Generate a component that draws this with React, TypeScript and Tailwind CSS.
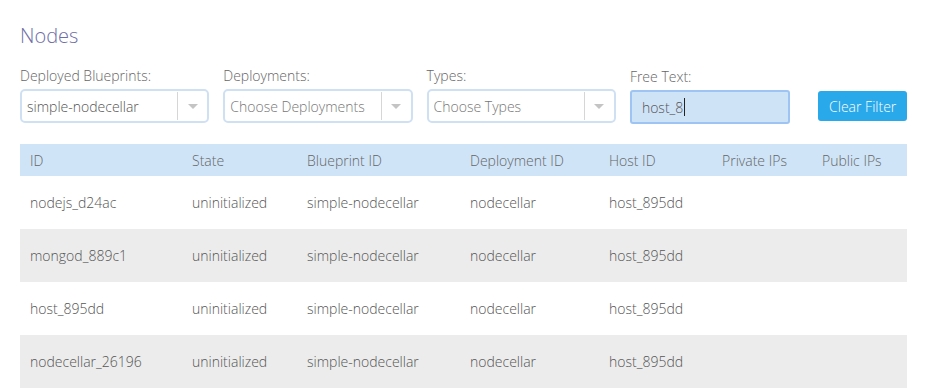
import React from 'react';

const font = { fontFamily: '"Open Sans", "Liberation Sans", sans-serif' };

const rows = [
  { id: 'nodejs_d24ac', state: 'uninitialized', blueprint: 'simple-nodecellar', deployment: 'nodecellar', host: 'host_895dd' },
  { id: 'mongod_889c1', state: 'uninitialized', blueprint: 'simple-nodecellar', deployment: 'nodecellar', host: 'host_895dd' },
  { id: 'host_895dd', state: 'uninitialized', blueprint: 'simple-nodecellar', deployment: 'nodecellar', host: 'host_895dd' },
  { id: 'nodecellar_26196', state: 'uninitialized', blueprint: 'simple-nodecellar', deployment: 'nodecellar', host: 'host_895dd' },
];

function Select({ label, value, placeholder }: { label: string; value?: string; placeholder?: boolean }) {
  return (
    <div className="flex flex-col w-[190px]">
      <label className="text-[14px] text-[#666] font-light leading-[20px] mb-[3px]">{label}</label>
      <div className="h-[34px] flex items-stretch border-2 border-[#cfe0f3] rounded-[5px] bg-white">
        <div className={`flex-1 flex items-center pl-[5px] text-[14px] font-light ${placeholder ? 'text-[#777]' : 'text-[#555]'}`}>
          {value}
        </div>
        <div className="w-[30px] flex items-center justify-center border-l border-[#d6d6d6] my-[1px]">
          <div className="w-0 h-0 border-l-[5px] border-r-[5px] border-t-[5px] border-l-transparent border-r-transparent border-t-[#c4c4c4]" />
        </div>
      </div>
    </div>
  );
}

export default function App() {
  return (
    <div className="w-[926px] h-[388px] overflow-hidden bg-white pl-[20px] pr-[19px]" style={font}>
      <h1 className="text-[20px] font-light text-[#6e6ea6] pt-[22px] leading-[28px]">Nodes</h1>

      <div className="flex items-start mt-[16px]">
        <Select label="Deployed Blueprints:" value="simple-nodecellar" />
        <div className="w-[14px]" />
        <Select label="Deployments:" value="Choose Deployments" placeholder />
        <div className="w-[14px]" />
        <Select label="Types:" value="Choose Types" placeholder />
        <div className="w-[14px]" />
        <div className="flex flex-col w-[161px] pt-[1px]">
          <label className="text-[14px] text-[#666] font-light leading-[20px] mb-[3px]">Free Text:</label>
          <div className="h-[34px] flex items-center border-2 border-[#9dc4f3] rounded-[3px] bg-[#cfe3f7] pl-[10px] text-[14px] font-light text-[#555]">
            host_8<span className="inline-block w-[1px] h-[18px] bg-[#222] ml-[1px]" />
          </div>
        </div>
        <button className="ml-[28px] mt-[25px] w-[89px] h-[30px] rounded-[3px] bg-[#29a8ea] text-white text-[14px] font-light">
          Clear Filter
        </button>
      </div>

      <table className="w-[887px] mt-[20px] border-collapse text-[14px] font-light text-[#555] table-fixed">
        <colgroup>
          <col className="w-[162px]" />
          <col className="w-[115px]" />
          <col className="w-[163px]" />
          <col className="w-[139px]" />
          <col className="w-[113px]" />
          <col className="w-[100px]" />
          <col className="w-[95px]" />
        </colgroup>
        <thead>
          <tr className="bg-[#cfe4f7] h-[32px] text-left text-[#666]">
            <th className="font-light pl-[10px]">ID</th>
            <th className="font-light pl-[10px]">State</th>
            <th className="font-light pl-[10px]">Blueprint ID</th>
            <th className="font-light pl-[10px]">Deployment ID</th>
            <th className="font-light pl-[10px]">Host ID</th>
            <th className="font-light pl-[10px]">Private IPs</th>
            <th className="font-light pl-[10px]">Public IPs</th>
          </tr>
        </thead>
        <tbody>
          {rows.map((r, i) => (
            <tr key={r.id} className={`h-[53px] ${i % 2 === 1 ? 'bg-[#ececec]' : 'bg-white'}`}>
              <td className="pl-[10px]">{r.id}</td>
              <td className="pl-[10px]">{r.state}</td>
              <td className="pl-[10px]">{r.blueprint}</td>
              <td className="pl-[10px]">{r.deployment}</td>
              <td className="pl-[10px]">{r.host}</td>
              <td className="pl-[10px]"></td>
              <td className="pl-[10px]"></td>
            </tr>
          ))}
        </tbody>
      </table>
    </div>
  );
}
